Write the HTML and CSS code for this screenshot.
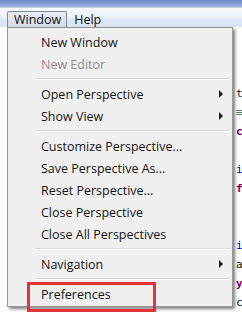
FILE: index.html
```html
<!DOCTYPE html>
<html>
<head>
<meta charset="utf-8">
<link rel="stylesheet" href="styles.css">
</head>
<body>
<div class="titlebar"></div>
<div class="menubar">
  <span class="mb-item open">Window</span>
  <span class="mb-item">Help</span>
</div>
<div class="editor">
  <div class="line"> </div>
  <div class="line"> </div>
  <div class="line"> </div>
  <div class="line">t</div>
  <div class="line"><span class="cm">≡</span></div>
  <div class="line"><span class="kw">c</span></div>
  <div class="line"> </div>
  <div class="line"><span class="fd">i</span></div>
  <div class="line"><span class="kw">f</span></div>
  <div class="line"> </div>
  <div class="line"> </div>
  <div class="line"><span class="fd">i</span></div>
  <div class="line">a</div>
  <div class="line"><span class="kw">y</span></div>
  <div class="line">c</div>
</div>
<div class="menu">
  <div class="item">New Window</div>
  <div class="item disabled">New Editor</div>
  <div class="sep"></div>
  <div class="item">Open Perspective<span class="arrow"></span></div>
  <div class="item">Show View<span class="arrow"></span></div>
  <div class="sep"></div>
  <div class="item">Customize Perspective...</div>
  <div class="item">Save Perspective As...</div>
  <div class="item">Reset Perspective...</div>
  <div class="item">Close Perspective</div>
  <div class="item">Close All Perspectives</div>
  <div class="sep"></div>
  <div class="item">Navigation<span class="arrow"></span></div>
  <div class="sep"></div>
  <div class="item">Preferences</div>
</div>
<div class="highlight"></div>
</body>
</html>
```
FILE: styles.css
```css
html, body {
  margin: 0;
  padding: 0;
}
body {
  width: 242px;
  height: 316px;
  overflow: hidden;
  position: relative;
  background: #ffffff;
  font-family: "Open Sans", "Noto Sans", sans-serif;
}
.titlebar {
  height: 8px;
  background: linear-gradient(to bottom, #6d88c4 0%, #8fa8d8 70%, #c6d4ec 100%);
}
.menubar {
  height: 19px;
  box-sizing: border-box;
  padding: 3px 0 0 7px;
  display: flex;
  align-items: stretch;
  background: linear-gradient(to bottom, #f7f9fd 0%, #f2f5fb 40%, #e0e7f4 60%, #dbe3f2 100%);
}
.mb-item {
  font-size: 12.5px;
  color: #111;
  padding: 0 5px 0 6px;
  line-height: 15px;
  border: 1px solid transparent;
  border-bottom: none;
}
.mb-item.open {
  border-color: #7b8ca2;
  border-radius: 2px 2px 0 0;
  background: linear-gradient(to bottom, #e9edf3, #d3dbe6);
}
.editor {
  background: #fff;
  padding-left: 236px;
  font-family: "DejaVu Sans Mono", monospace;
  font-size: 11px;
  color: #111;
}
.line {
  height: 19px;
  line-height: 19px;
  white-space: pre;
}
.kw { color: #7f0055; font-weight: bold; }
.cm { color: #3f7f5f; }
.fd { color: #0000c0; }
.menu {
  position: absolute;
  left: 7px;
  top: 27px;
  width: 226px;
  box-sizing: border-box;
  border: 1px solid #979797;
  background: #f0f0f0;
  padding: 3px 2px 1px 0;
  box-shadow: 2px 2px 3px rgba(0, 0, 0, 0.5);
}
.item {
  height: 22px;
  display: flex;
  align-items: center;
  padding-left: 33px;
  font-size: 12.5px;
  color: #151515;
  white-space: nowrap;
}
.item.disabled {
  color: #8e8e8e;
}
.arrow {
  margin-left: auto;
  margin-right: 7px;
  width: 0;
  height: 0;
  border-left: 4px solid #1c1c1c;
  border-top: 4px solid transparent;
  border-bottom: 4px solid transparent;
}
.sep {
  height: 8px;
  margin-left: 27px;
  background: linear-gradient(to bottom, transparent 3px, #dcdcdc 3px, #dcdcdc 4px, #ffffff 4px, #ffffff 5px, transparent 5px);
}
.highlight {
  position: absolute;
  left: 27px;
  top: 282px;
  width: 129px;
  height: 30px;
  box-sizing: border-box;
  border: 3px solid #e2333d;
}
```
